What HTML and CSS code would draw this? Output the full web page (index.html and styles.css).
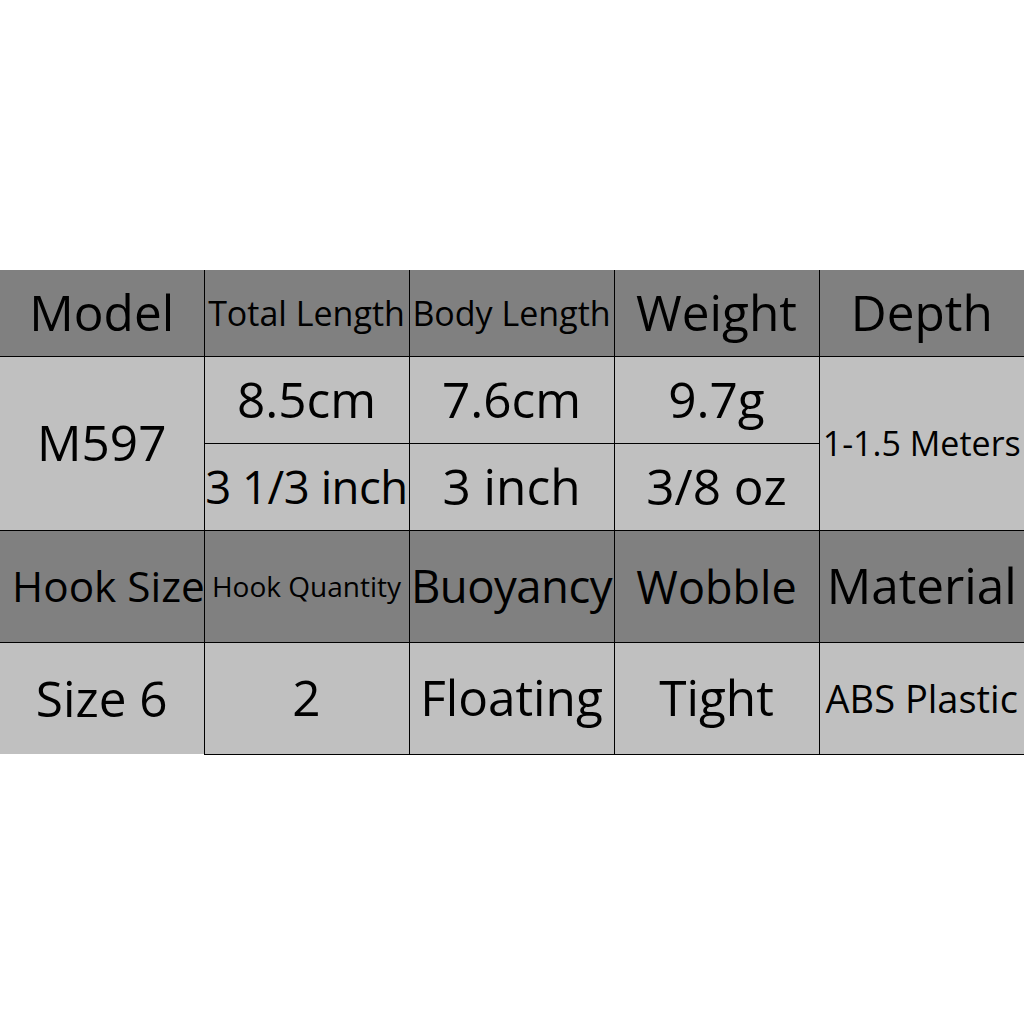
FILE: index.html
```html
<!DOCTYPE html>
<html>
<head>
<meta charset="utf-8">
<link rel="stylesheet" href="styles.css">
</head>
<body>
<table class="spec">
  <colgroup>
    <col class="c1"><col class="c2"><col class="c2"><col class="c2"><col class="c2">
  </colgroup>
  <tr class="head r-top">
    <td class="first lg">Model</td>
    <td class="md">Total Length</td>
    <td class="md">Body Length</td>
    <td class="lg">Weight</td>
    <td class="lg">Depth</td>
  </tr>
  <tr class="data r-short">
    <td class="first lg" rowspan="2">M597</td>
    <td class="lg">8.5cm</td>
    <td class="lg">7.6cm</td>
    <td class="lg">9.7g</td>
    <td class="md" rowspan="2">1-1.5 Meters</td>
  </tr>
  <tr class="data r-short">
    <td class="lg tight">3 1/3 inch</td>
    <td class="lg">3 inch</td>
    <td class="lg">3/8 oz</td>
  </tr>
  <tr class="head r-tall">
    <td class="first lg hs">Hook Size</td>
    <td class="sm">Hook Quantity</td>
    <td class="lg tight">Buoyancy</td>
    <td class="lg wb">Wobble</td>
    <td class="lg">Material</td>
  </tr>
  <tr class="data r-tall last">
    <td class="first lg">Size 6</td>
    <td class="lg">2</td>
    <td class="lg">Floating</td>
    <td class="lg">Tight</td>
    <td class="mdl">ABS Plastic</td>
  </tr>
</table>
</body>
</html>
```

FILE: styles.css
```css
html, body {
  margin: 0;
  padding: 0;
  background: #ffffff;
}

body {
  padding-top: 270px;
}

.spec {
  width: 1024px;
  table-layout: fixed;
  border-collapse: collapse;
  border-spacing: 0;
  font-family: "Open Sans", "Noto Sans", sans-serif;
  color: #000000;
}

.c1 { width: 204px; }
.c2 { width: 205px; }

.spec td {
  padding: 0;
  text-align: center;
  vertical-align: middle;
  white-space: nowrap;
  overflow: visible;
  border-left: 1px solid #000;
  border-top: 1px solid #000;
  line-height: 1;
}

.spec td.first {
  border-left: none;
}

.spec tr:first-child td {
  border-top: none;
}

.spec tr.last td {
  border-bottom: 1px solid #000;
}

.spec tr.last td.first {
  border-bottom: none;
}

.head td { background: #808080; }
.data td { background: #c0c0c0; }

.r-top { height: 86px; }
.r-short { height: 87px; }
.r-tall { height: 112px; }

.lg { font-size: 49.5px; }
.spec td.tight { font-size: 45.5px; letter-spacing: -0.5px; }
.spec td.wb { font-size: 45px; }
.spec td.hs { font-size: 42.3px; padding-left: 12px; }
.md { font-size: 34px; }
.mdl { font-size: 38px; }
.sm { font-size: 28px; }
```
